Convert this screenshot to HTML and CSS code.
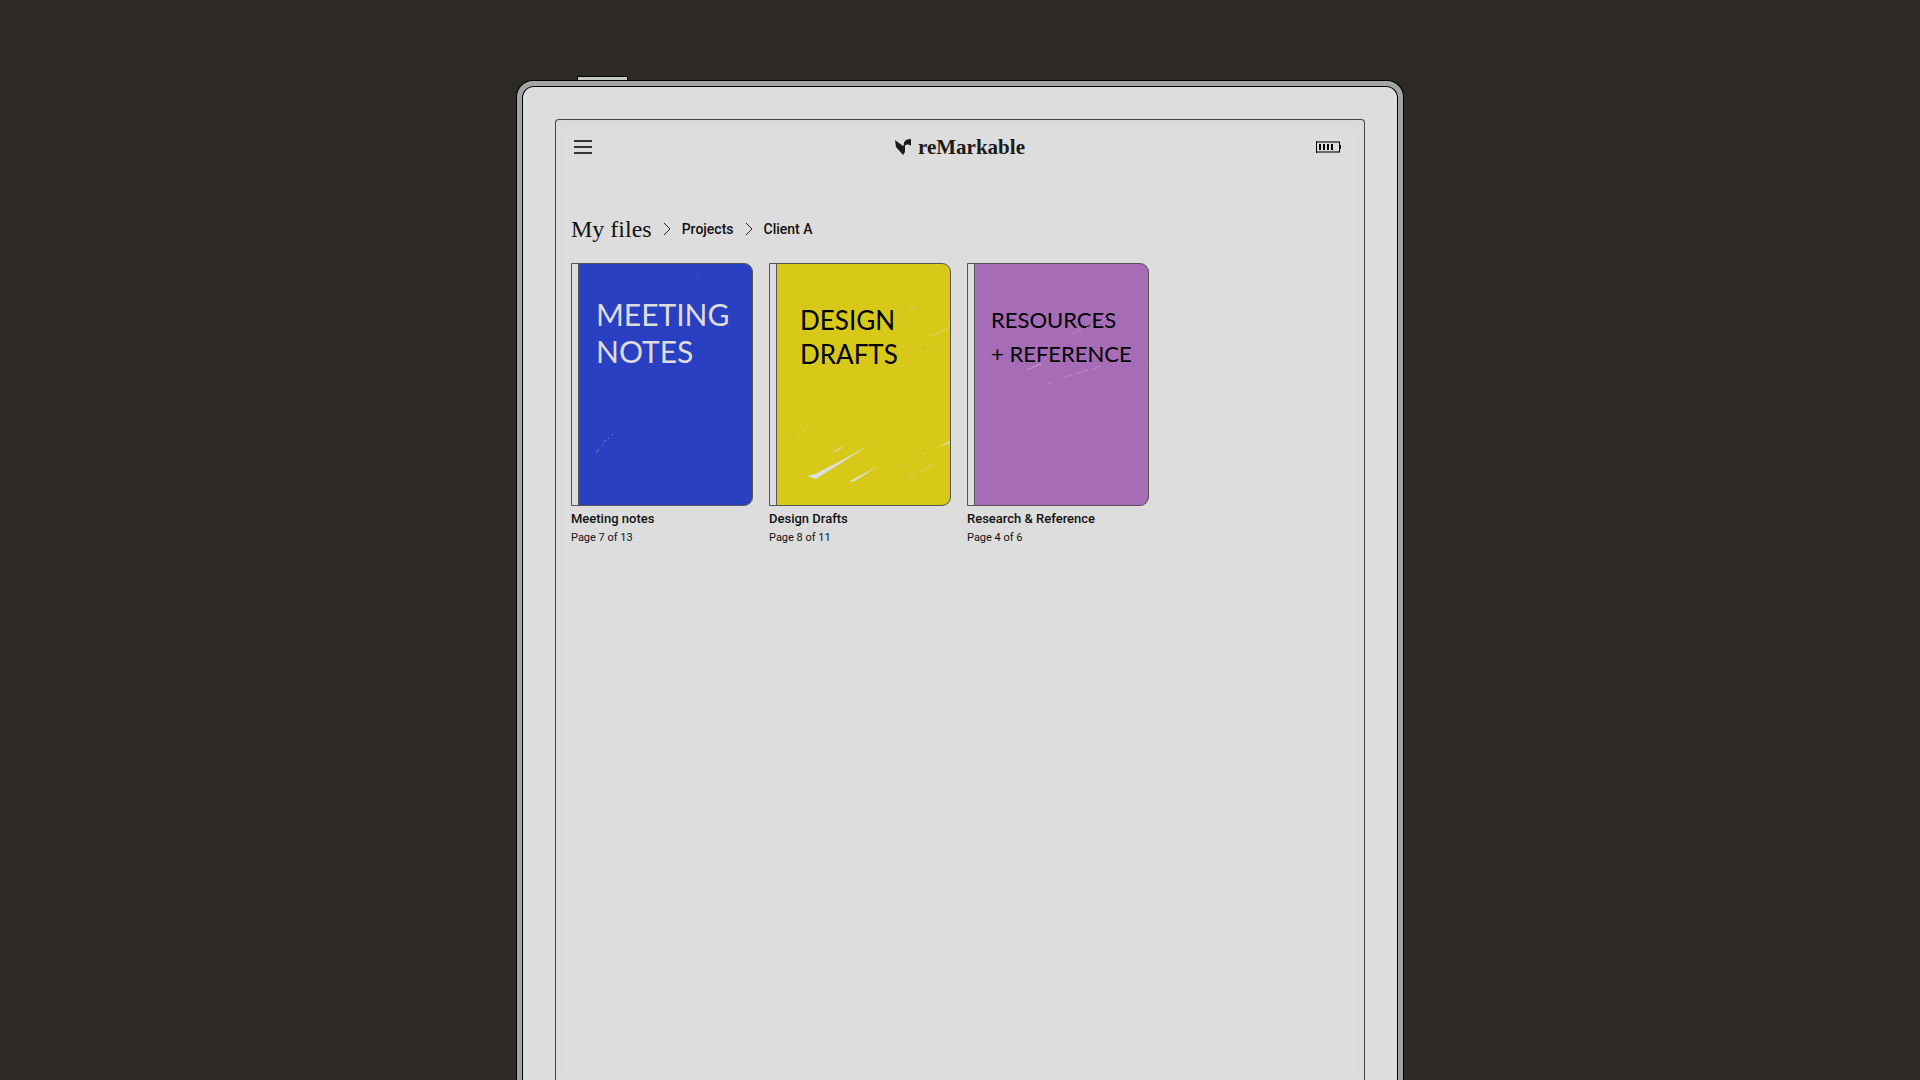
FILE: index.html
```html
<!DOCTYPE html>
<html lang="en">
<head>
    <meta charset="UTF-8">
    <meta name="viewport" content="width=device-width, initial-scale=1.0">
    <title>My files</title>
    <link rel="stylesheet" href="styles.css">
</head>
<body>

<div class="device">
    <span class="power-button"></span>
    <div class="bezel">
        <main class="screen">
            <header class="top-bar">
                <button class="menu-btn" aria-label="Menu">
                    <span></span>
                    <span></span>
                    <span></span>
                </button>
                <a class="brand" href="#">
                    <svg width="17" height="16" viewBox="0 0 17 16" fill="#1c1a18" aria-hidden="true">
                        <path d="M0 1L8 7V16L1 8Z"/>
                        <path d="M9 8C8 3 10 0 16 0V7C13 5 11 5 9 8Z"/>
                        <path d="M8 7L10 5V13L8 16Z"/>
                    </svg>
                    <span>reMarkable</span>
                </a>
                <svg class="battery" width="25" height="12" viewBox="0 0 25 12" aria-label="Battery">
                    <path d="M0 0H24V2H0ZM0 10H24V12H0Z" fill="#666"/>
                    <path d="M0 0H1V12H0ZM23 1H24V4H25V8H24V11H23ZM3 3H5V9H3ZM7 3H9V9H7ZM11 3H13V9H11ZM15 3H17V9H15Z" fill="#000"/>
                </svg>
            </header>

            <nav class="breadcrumb" aria-label="Breadcrumb">
                <h1><a href="#">My files</a></h1>
                <svg width="8" height="12" viewBox="0 0 8 12"><path d="M1 0L7 6L1 12"/></svg>
                <a href="#">Projects</a>
                <svg width="8" height="12" viewBox="0 0 8 12"><path d="M1 0L7 6L1 12"/></svg>
                <a href="#">Client A</a>
            </nav>

            <section class="notebooks">
                <a class="notebook" href="#">
                    <div class="cover blue">
                        <p>MEETING<br>NOTES</p>
                        <svg class="scratches" viewBox="0 0 173 241" aria-hidden="true">
                            <path d="M17 189l3-4M23 182l1-1M25 178l2-2M29 175l1-1M33 171l1-1M118 11h1" fill="none" stroke="#7480c8"/>
                        </svg>
                    </div>
                    <h2>Meeting notes</h2>
                    <span>Page 7 of 13</span>
                </a>
                <a class="notebook" href="#">
                    <div class="cover yellow">
                        <p>DESIGN<br>DRAFTS</p>
                        <svg class="scratches" viewBox="0 0 173 241" aria-hidden="true">
                            <path d="M30 212L38 210L67 195L92 181L69 196L39 215Z"/>
                            <path d="M73 217L88 209L101 202L89 210L76 218Z"/>
                            <path d="M54 189L64 183L65 184L57 188Z"/>
                            <path d="M161 183L173 177V179Z"/>
                            <path d="M20 172l3-2M26 168l2-2M20 208h2M14 218h1M125 202l3-1M136 196l4-2M146 191l3-2M131 214l8-4M143 207l13-6M153 72l20-9M149 81h3M132 45l6-2M118 54h2" fill="none" stroke="#ddd26a"/>
                        </svg>
                    </div>
                    <h2>Design Drafts</h2>
                    <span>Page 8 of 11</span>
                </a>
                <a class="notebook" href="#">
                    <div class="cover purple">
                        <p>RESOURCES<br>+ REFERENCE</p>
                        <svg class="scratches" viewBox="0 0 173 241" aria-hidden="true">
                            <path d="M51 106L66 99L67 100L53 106Z"/>
                            <path d="M97 70l10-4M111 64l7-3M124 58l8-4M72 120l6-2M88 114l9-3M101 110l12-4M117 106l8-4M155 32h3M138 39h1M172 102h1M9 163h1M28 115h1" fill="none" stroke="#b98bc4"/>
                        </svg>
                    </div>
                    <h2>Research &amp; Reference</h2>
                    <span>Page 4 of 6</span>
                </a>
            </section>
        </main>
    </div>
</div>

</body>
</html>
```

FILE: styles.css
```css
* {
    box-sizing: border-box;
}

body {
    display: flex;
    justify-content: center;
    min-height: 100vh;
    margin: 0;
    padding-top: 80px;
    background: #2d2926;
    color: #111;
    font-family: Roboto, "Liberation Sans", sans-serif;
}

a {
    color: inherit;
    text-decoration: none;
}

/* tablet body */
.device {
    position: relative;
    display: flex;
    width: 100%;
    max-width: 888px;
    padding: 5px 5px 0;
    border: 1px solid #000;
    border-bottom: none;
    border-radius: 17px 17px 0 0;
    background: #a3a4a4;
}

.power-button {
    position: absolute;
    top: -5px;
    left: 60px;
    width: 51px;
    height: 4px;
    border: 1px solid #000;
    border-bottom: none;
    background: #c5c8c4;
}

.bezel {
    display: flex;
    flex: 1;
    padding: 32px 32px 0;
    border: 1px solid #000;
    border-bottom: none;
    border-radius: 12px 12px 0 0;
    background: #ddd;
}

.screen {
    flex: 1;
    padding: 0 15px;
    border: 1px solid #484444;
    border-bottom: none;
    border-radius: 4px 4px 0 0;
    box-shadow: inset 0 2px 8px #d4d7d6;
}

.top-bar {
    display: grid;
    grid-template-columns: 1fr auto 1fr;
    align-items: center;
    height: 54px;
}

.menu-btn {
    display: flex;
    flex-direction: column;
    gap: 4px;
    width: 18px;
    margin-left: 3px;
    padding: 0;
    border: none;
    background: none;
    cursor: pointer;
}

.menu-btn span {
    width: 18px;
    height: 2px;
    background: #333;
}

.brand {
    display: flex;
    align-items: center;
    gap: 6px;
    color: #1c1a18;
    font: bold 21px/28px "Liberation Serif", serif;
}

.battery {
    justify-self: end;
    margin-right: 8px;
}

/* path to the open folder */
.breadcrumb {
    display: flex;
    align-items: center;
    gap: 11px;
    height: 32px;
    margin-top: 39px;
    font-size: 14px;
    font-weight: 500;
}

.breadcrumb h1 {
    margin: 0;
    font: 24px/32px "Liberation Serif", serif;
}

.breadcrumb svg {
    fill: none;
    stroke: #222;
}

.notebooks {
    display: flex;
    flex-wrap: wrap;
    gap: 16px;
    margin-top: 18px;
}

.notebook {
    width: 182px;
    font-size: 11px;
    line-height: 16px;
}

.notebook h2 {
    margin: 5px 0 3px;
    font-size: 13px;
    font-weight: 500;
    line-height: 16px;
}

.notebook span {
    display: block;
}

/* notebook cover with the spine on the left */
.cover {
    position: relative;
    height: 243px;
    border: 1px solid #555;
    border-radius: 0 9px 9px 0;
    font-family: Lato, sans-serif;
    white-space: nowrap;
}

.cover::before {
    content: "";
    position: absolute;
    inset: 0 auto 0 0;
    width: 6px;
    border-right: 1px solid #555;
    background: #ddd;
}

.cover p {
    margin: 0;
    padding-top: 39px;
    font-size: 22px;
    line-height: 34px;
}

.scratches {
    position: absolute;
    inset: 0 0 0 7px;
    width: 173px;
    height: 241px;
    fill: #ddd;
}

.blue {
    padding-left: 24px;
    background: #2940c2;
    color: #ddd;
}

.blue p {
    padding-top: 32px;
    font-size: 30px;
    line-height: 37px;
}

.yellow {
    padding-left: 30px;
    background: #d8c817;
}

.yellow p {
    font-size: 26px;
}

.purple {
    padding-left: 23px;
    background: #a66cb6;
}

.yellow p,
.purple p {
    color: #000;
}

.purple .scratches {
    fill: #c49acb;
}
```
